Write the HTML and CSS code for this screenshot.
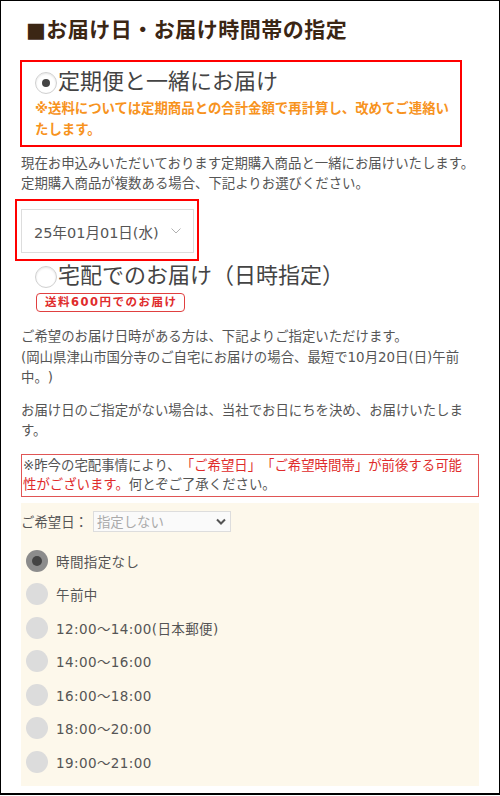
FILE: index.html
```html
<!DOCTYPE html>
<html lang="ja">
<head>
  <meta charset="UTF-8">
  <meta name="viewport" content="width=device-width, initial-scale=1">
  <title>お届け日・お届け時間帯の指定</title>
  <link rel="stylesheet" href="styles.css">
</head>
<body>

  <div class="page">
    <h2 class="title">■お届け日・お届け時間帯の指定</h2>

    <!-- 定期便と一緒 -->
    <div class="opt-box">
      <div class="big-radio"><span class="radio on"></span><span class="big-label">定期便と一緒にお届け</span></div>
      <p class="note-orange">※送料については定期商品との合計金額で再計算し、改めてご連絡いたします。</p>
    </div>

    <p class="desc first">現在お申込みいただいております定期購入商品と一緒にお届けいたします。<br>定期購入商品が複数ある場合、下記よりお選びください。</p>

    <div class="date-box">
      <div class="date-select">
        <span>25年01月01日(水)</span>
        <svg width="10" height="6" viewBox="0 0 10 6"><polyline points="0.5,0.5 5,5 9.5,0.5" fill="none" stroke="#b0b0b0" stroke-width="1"/></svg>
      </div>
    </div>

    <!-- 宅配 -->
    <div class="big-radio second"><span class="radio"></span><span class="big-label">宅配でのお届け（日時指定）</span></div>
    <div class="badge">送料600円でのお届け</div>

    <p class="desc lead">ご希望のお届け日時がある方は、下記よりご指定いただけます。<br>(岡山県津山市国分寺のご自宅にお届けの場合、最短で10月20日(日)午前中。)</p>
    <p class="desc next">お届け日のご指定がない場合は、当社でお日にちを決め、お届けいたします。</p>

    <div class="notice">※昨今の宅配事情により、<span class="red">「ご希望日」「ご希望時間帯」が前後する可能</span><span class="red">性がございます。</span>何とぞご了承ください。</div>

    <div class="time-panel">
      <div class="date-row">
        <span>ご希望日：</span>
        <div class="select">
          <span>指定しない</span>
          <svg width="10" height="7" viewBox="0 0 10 7"><polyline points="1,1.5 5,5.5 9,1.5" fill="none" stroke="#555" stroke-width="2"/></svg>
        </div>
      </div>
      <ul class="time-list">
        <li><span class="dot on"></span>時間指定なし</li>
        <li><span class="dot"></span>午前中</li>
        <li><span class="dot"></span>12:00～14:00(日本郵便)</li>
        <li><span class="dot"></span>14:00～16:00</li>
        <li><span class="dot"></span>16:00～18:00</li>
        <li><span class="dot"></span>18:00～20:00</li>
        <li><span class="dot"></span>19:00～21:00</li>
      </ul>
    </div>
  </div>

</body>
</html>
```

FILE: styles.css
```css
body {
  margin: 0;
  font-family: "DejaVu Sans", "Noto Sans CJK JP", sans-serif;
  color: #555;
  background: #fff;
  text-spacing-trim: space-all;
}

.page {
  box-sizing: border-box;
  width: 500px;
  height: 795px;
  border: 1px solid #000;
  border-bottom-width: 2px;
  padding: 14px 20px 0;
}

.title {
  margin: 0;
  padding-left: 5px;
  font-size: 21px;
  line-height: 30px;
  font-weight: bold;
  letter-spacing: 0.5px;
  color: #3b2614;
}

/* red boxes */
.opt-box {
  box-sizing: border-box;
  width: 442px;
  margin: 15px 0 0 -1px;
  border: 2px solid #f00;
  padding: 7px 3px 5px 13px;
}

.big-radio {
  display: flex;
  align-items: center;
  height: 26px;
}

.big-radio.second {
  margin: 2px 0 0 14px;
}

.big-label {
  margin-left: 1px;
  font-size: 22px;
  line-height: 26px;
  color: #444;
}

.radio {
  box-sizing: border-box;
  width: 22px;
  height: 22px;
  border-radius: 50%;
  border: 1px solid #d0d0d0;
  background: #fff;
  box-shadow: inset 0 1px 2px rgba(0, 0, 0, 0.1);
  display: flex;
  align-items: center;
  justify-content: center;
  margin-top: 2px;
}

.radio.on::after {
  content: "";
  width: 8px;
  height: 8px;
  border-radius: 50%;
  background: #444;
}

.note-orange {
  margin: 4px 0 0;
  font-size: 13.4px;
  line-height: 20.5px;
  font-weight: bold;
  color: #f7931e;
}

.desc {
  margin: 0;
  font-size: 13.4px;
  line-height: 20px;
}

.desc.first {
  margin-top: 7px;
}

.desc.lead {
  margin-top: 15px;
  line-height: 20.5px;
}

.desc.next {
  margin-top: 12px;
  line-height: 20.5px;
}

.date-box {
  box-sizing: border-box;
  width: 184px;
  margin: 5px 0 0 -6px;
  border: 2px solid #f00;
  padding: 8px 3px 6px 4px;
}

.date-select {
  box-sizing: border-box;
  height: 44px;
  border: 1px solid #ddd;
  display: flex;
  align-items: center;
  padding: 0 12px 0 12px;
  font-size: 14.5px;
  color: #555;
}

.date-select svg {
  margin-left: auto;
}

.badge {
  width: fit-content;
  margin: 4px 0 0 15px;
  padding: 0 6px 0 8px;
  height: 19px;
  box-sizing: border-box;
  border: 1px solid #e04040;
  border-radius: 4px;
  font-size: 11.5px;
  line-height: 17px;
  font-weight: bold;
  letter-spacing: 1.5px;
  color: #e02b2b;
}

.notice {
  margin-top: 12px;
  border: 1px solid #e05555;
  padding: 1px 3px 2px 1px;
  font-size: 13.4px;
  line-height: 19px;
}

.notice .red {
  color: #e02b2b;
}

/* time panel */
.time-panel {
  margin-top: 6px;
  padding: 8px 0 13px;
  background: #fdf8eb;
}

.date-row {
  display: flex;
  align-items: center;
  gap: 5px;
  height: 21px;
  font-size: 13.4px;
}

.select {
  box-sizing: border-box;
  width: 138px;
  height: 21px;
  border: 1px solid #ddd;
  background: #fafafa;
  display: flex;
  align-items: center;
  padding: 0 4px 0 3px;
  color: #aaa;
}

.select svg {
  margin-left: auto;
}

.time-list {
  list-style: none;
  margin: 18px 0 0;
  padding: 0 0 0 5px;
  display: flex;
  flex-direction: column;
  gap: 11.5px;
}

.time-list li {
  display: flex;
  align-items: center;
  gap: 8px;
  height: 22px;
  font-size: 13.5px;
  letter-spacing: 0.4px;
  color: #555;
}

.dot {
  width: 22px;
  height: 22px;
  border-radius: 50%;
  background: #dcdcdc;
  display: flex;
  align-items: center;
  justify-content: center;
}

.dot.on {
  background: #8c8c8c;
}

.dot.on::after {
  content: "";
  width: 10px;
  height: 10px;
  border-radius: 50%;
  background: #444;
}
```
